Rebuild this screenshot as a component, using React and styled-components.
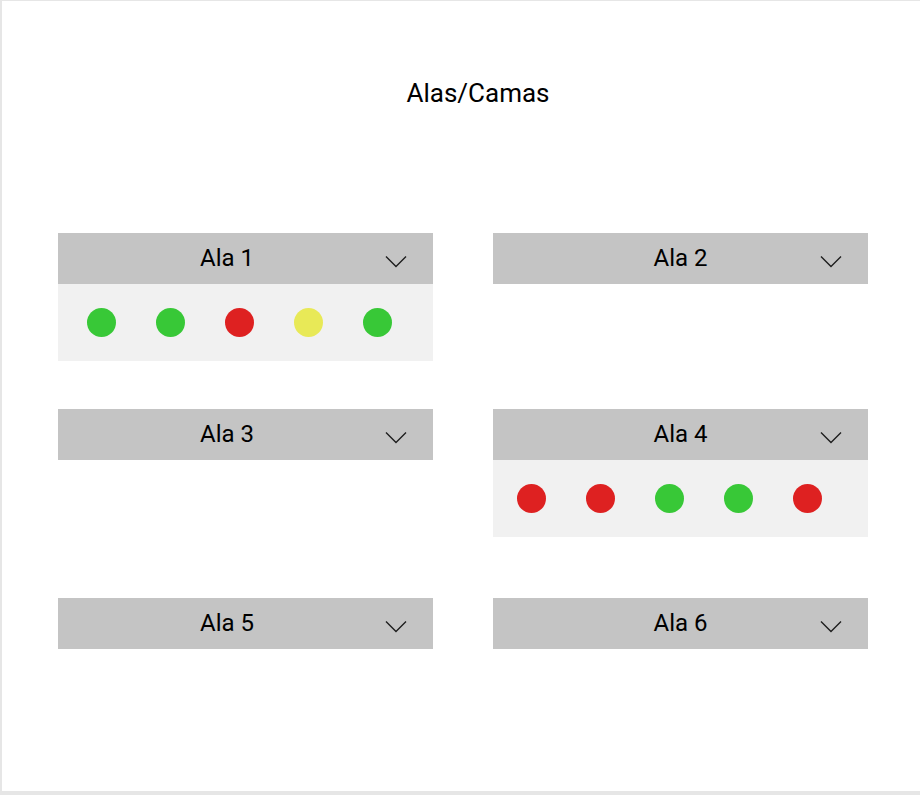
import styled, { createGlobalStyle } from "styled-components";

const GlobalStyle = createGlobalStyle`
  html, body {
    margin: 0;
    padding: 0;
    background: #e6e6e6;
  }
  body {
    font-family: Roboto, "Liberation Sans", sans-serif;
    color: #000;
  }
`;

const COLORS = {
  green: "#38c837",
  red: "#de2121",
  yellow: "#e8e957",
};

const rows = [
  {
    space: 125,
    wings: [
      { name: "Ala 1", side: "left", beds: ["green", "green", "red", "yellow", "green"] },
      { name: "Ala 2", side: "right" },
    ],
  },
  {
    space: 48,
    wings: [
      { name: "Ala 3", side: "left" },
      { name: "Ala 4", side: "right", beds: ["red", "red", "green", "green", "red"] },
    ],
  },
  {
    space: 61,
    wings: [
      { name: "Ala 5", side: "left" },
      { name: "Ala 6", side: "right" },
    ],
  },
];

function Chevron() {
  return (
    <ChevronIcon width="22" height="13" viewBox="0 0 22 13">
      <polyline
        points="1,1.5 11,11.5 21,1.5"
        fill="none"
        stroke="#1e1e1e"
        strokeWidth="1.4"
      />
    </ChevronIcon>
  );
}

function Wing({ wing }) {
  return (
    <WingBox>
      <Header>
        <Label $side={wing.side}>{wing.name}</Label>
        <Chevron />
      </Header>
      {wing.beds && (
        <Beds $side={wing.side}>
          {wing.beds.map((c, i) => (
            <Bed key={i} $color={COLORS[c]} />
          ))}
        </Beds>
      )}
    </WingBox>
  );
}

export default function App() {
  return (
    <>
      <GlobalStyle />
      <Page>
        <Title>Alas/Camas</Title>
        {rows.map((row, i) => (
          <Row key={i} $space={row.space}>
            {row.wings.map((w) => (
              <Wing key={w.name} wing={w} />
            ))}
          </Row>
        ))}
      </Page>
    </>
  );
}

const Page = styled.div`
  box-sizing: border-box;
  width: 918px;
  height: 790px;
  margin: 1px 0 0 2px;
  background: #fff;
  padding: 77px 0 0 56px;
`;

const Title = styled.h1`
  margin: 0;
  padding-left: 15px;
  width: 810px;
  font-size: 26px;
  font-weight: 400;
  line-height: 30px;
  text-align: center;
`;

const Row = styled.div`
  display: grid;
  grid-template-columns: 375px 375px;
  column-gap: 60px;
  align-items: start;
  min-height: ${(p) => (p.$space === 61 ? 51 : 128)}px;
  margin-top: ${(p) => p.$space}px;
`;

const WingBox = styled.div`
  display: flex;
  flex-direction: column;
`;

const Header = styled.div`
  display: flex;
  align-items: center;
  height: 51px;
  background: #c4c4c4;
  padding-right: 26px;
`;

const Label = styled.span`
  flex: 1;
  text-align: center;
  font-size: 24px;
  line-height: 28px;
  padding-bottom: 2px;
  padding-left: ${(p) => (p.$side === "left" ? 11 : 48)}px;
`;

const ChevronIcon = styled.svg`
  display: block;
  margin-top: 6px;
`;

const Beds = styled.div`
  display: flex;
  align-items: center;
  gap: 40px;
  height: 77px;
  padding-left: ${(p) => (p.$side === "left" ? 29 : 24)}px;
  background: #f1f1f1;
`;

const Bed = styled.span`
  width: 29px;
  height: 29px;
  border-radius: 50%;
  background: ${(p) => p.$color};
`;
